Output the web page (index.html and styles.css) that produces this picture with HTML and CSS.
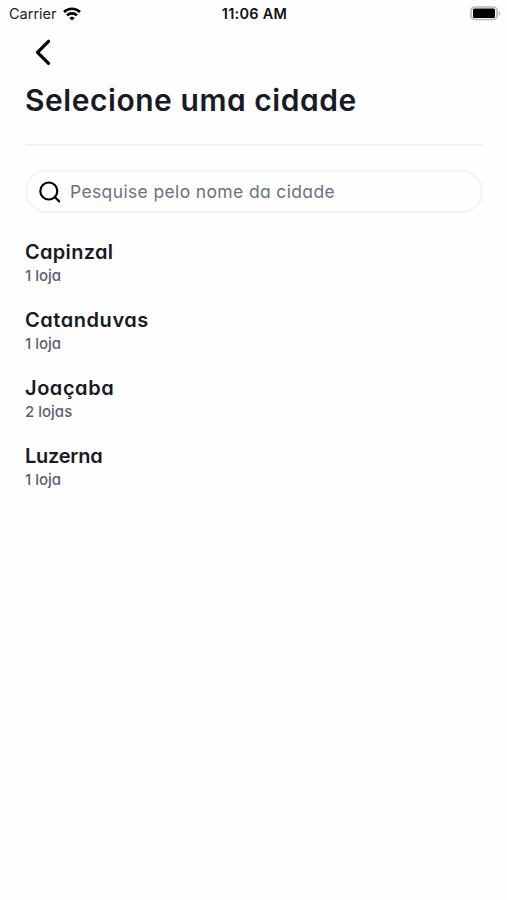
FILE: index.html
```html
<!DOCTYPE html>
<html lang="pt-BR">
<head>
<meta charset="utf-8">
<meta name="viewport" content="width=device-width, initial-scale=1">
<title>Selecione uma cidade</title>
<link rel="stylesheet" href="styles.css">
</head>
<body>
<header class="status">
  <div class="carrier"><span class="carrier-name">Carrier</span>
    <svg class="wifi" width="18" height="14" viewBox="0 0 18 14" fill="none" stroke="#000" stroke-width="2.600"><path d="M1 5C5.500.6 12.500.6 17 5M4 8.400c2.800-2.700 7.200-2.700 10 0"/><path d="M9 13.600 6.300 10.900c1.500-1.400 3.900-1.400 5.400 0z" fill="#000" stroke="none"/></svg>
  </div>
  <time class="clock">11:06 AM</time>
  <svg class="battery" width="31" height="15" viewBox="0 0 31 15"><rect x="1" y="1" width="26" height="12.500" rx="4" fill="#fff" stroke="#b8b8b8" stroke-width="1.700"/><rect x="3" y="2.500" width="22" height="9.500" rx="1.500"/><path d="M28.600 5v5c2.200-1 2.200-4 0-5" fill="#b5b5b5"/></svg>
</header>
<main class="page">
  <button class="back" aria-label="Voltar"><svg width="16" height="26" viewBox="0 0 16 26" fill="none" stroke="#000" stroke-width="3.200" stroke-linecap="round" stroke-linejoin="round"><path d="M13.500 2.300 2.500 13.300l11 11"/></svg></button>
  <h1 class="title">Selecione uma cidade</h1>
  <label class="search">
    <svg width="22" height="22" viewBox="0 0 22 22" fill="none" stroke="#000" stroke-width="2.200" stroke-linecap="round"><circle cx="9.800" cy="10" r="8.500"/><path d="m16 16.200 4.200 4.200"/></svg>
    <span class="placeholder">Pesquise pelo nome da cidade</span>
  </label>
  <ul class="cities">
    <li class="city"><h2 class="name capinzal">Capinzal</h2><p class="count">1 loja</p></li>
    <li class="city"><h2 class="name">Catanduvas</h2><p class="count">1 loja</p></li>
    <li class="city"><h2 class="name">Joaçaba</h2><p class="count">2 lojas</p></li>
    <li class="city"><h2 class="name luzerna">Luzerna</h2><p class="count">1 loja</p></li>
  </ul>
</main>
</body>
</html>
```
FILE: styles.css
```css
* { box-sizing: border-box; margin: 0; padding: 0; }
body { background: #fefefe; color: #181a25; font-family: Inter, "Open Sans", sans-serif; font-feature-settings: "cv11" 1; min-height: 900px; }
.status { display: grid; grid-template-columns: 1fr auto 1fr; align-items: center; height: 27px; padding: 0 6px 0 8px; color: #111; font-feature-settings: normal; }
.carrier { display: flex; align-items: center; gap: 6px; padding-left: 1px; }
.carrier-name { font-size: 14.5px; color: #222; }
.clock { font-size: 14.5px; font-weight: 600; letter-spacing: .25px; }
.battery { justify-self: end; }
.page { padding: 12px 24px 0 25px; }
.back { display: block; width: 16px; height: 26px; margin-left: 10px; border: 0; background: none; }
.back svg { display: block; }
.title { height: 81px; padding-top: 14px; border-bottom: 2px solid #f1f2f3; font-size: 30px; font-weight: 600; letter-spacing: .54px; line-height: 42px; white-space: nowrap; }
.search { display: flex; align-items: center; gap: 9px; height: 43px; margin-top: 24px; padding-left: 12px; border: 2px solid #f1f3f4; border-radius: 22px; }
.placeholder { font-size: 17.5px; letter-spacing: .36px; color: #6b7280; white-space: nowrap; }
.cities { display: grid; row-gap: 18px; margin-top: 25px; list-style: none; }
.city { height: 50px; }
.name { font-size: 20px; font-weight: 600; letter-spacing: .55px; line-height: 28px; }
.capinzal { letter-spacing: .3px; }
.luzerna { letter-spacing: -.25px; }
.count { font-size: 15px; font-weight: 450; line-height: 20px; color: #596072; }
```
